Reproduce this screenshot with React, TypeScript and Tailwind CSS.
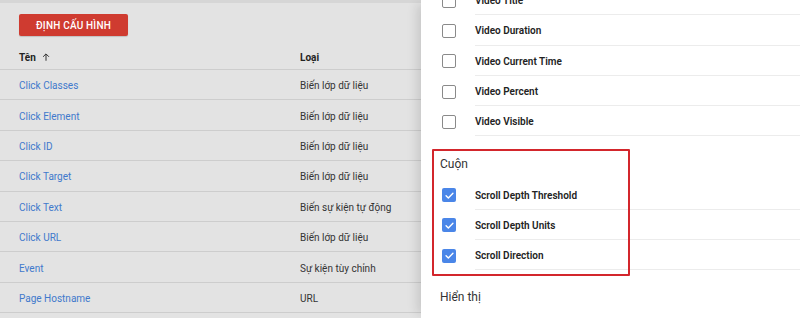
import React from "react";

const leftRows: [string, string][] = [
  ["Click Classes", "Biến lớp dữ liệu"],
  ["Click Element", "Biến lớp dữ liệu"],
  ["Click ID", "Biến lớp dữ liệu"],
  ["Click Target", "Biến lớp dữ liệu"],
  ["Click Text", "Biến sự kiện tự động"],
  ["Click URL", "Biến lớp dữ liệu"],
  ["Event", "Sự kiện tùy chỉnh"],
  ["Page Hostname", "URL"],
];

function Box({ checked }: { checked: boolean }) {
  if (checked) {
    return (
      <div className="w-[14px] h-[14px] rounded-[2px] bg-[#4a86e8] flex items-center justify-center shrink-0">
        <svg width="11" height="11" viewBox="0 0 24 24" fill="none">
          <path d="M4.5 12.5l5 5L19.5 7" stroke="white" strokeWidth="3" strokeLinecap="round" strokeLinejoin="round" />
        </svg>
      </div>
    );
  }
  return <div className="w-[14px] h-[14px] rounded-[2px] border-[1.5px] border-[#8a8a8a] shrink-0" />;
}

function CheckRow({ label, checked }: { label: string; checked: boolean }) {
  return (
    <div className="flex h-[30.3px] items-stretch">
      <div className="w-[54px] pl-[21px] pt-[1px] flex items-center">
        <Box checked={checked} />
      </div>
      <div className="flex-1 flex items-center pt-[2px] border-b border-[#ececec] text-[10px] font-semibold text-[#222]">
        {label}
      </div>
    </div>
  );
}

export default function App() {
  return (
    <div
      className="w-[800px] h-[318px] overflow-hidden flex relative"
      style={{ fontFamily: "Roboto, 'Noto Sans', sans-serif" }}
    >
      <div className="w-[421px] shrink-0 bg-[#e3e3e3] flex flex-col border-t-[3px] border-[#d6d6d6]">
        <div className="pl-[19px] pt-[11px]">
          <div className="w-[109px] h-[22px] bg-[#cf3b30] rounded-[2px] flex items-center justify-center text-white text-[10px] font-medium tracking-[0.2px] shadow-[0_1px_1px_rgba(0,0,0,0.15)]">
            ĐỊNH CẤU HÌNH
          </div>
        </div>
        <div className="flex items-center h-[34px] pt-[9px] border-b border-[#cdcdcd] text-[10px] font-bold text-[#222]">
          <div className="w-[281px] ml-[19px] flex items-center gap-[5px]">
            Tên
            <svg width="10" height="10" viewBox="0 0 24 24" fill="none">
              <path d="M12 21V5M5 11.5l7-7 7 7" stroke="#333" strokeWidth="2.4" />
            </svg>
          </div>
          <div>Loại</div>
        </div>
        {leftRows.map(([n, t]) => (
          <div key={n} className="flex items-center h-[30.4px] pt-[2px] border-b border-[#cdcdcd] text-[10px] shrink-0">
            <div className="w-[281px] ml-[19px] text-[#4179cc]">{n}</div>
            <div className="text-[#333]">{t}</div>
          </div>
        ))}
      </div>
      <div className="flex-1 bg-white relative shadow-[-8px_0_10px_-4px_rgba(0,0,0,0.12)]">
        <div className="-mt-[15px]">
          <CheckRow label="Video Title" checked={false} />
          <CheckRow label="Video Duration" checked={false} />
          <CheckRow label="Video Current Time" checked={false} />
          <CheckRow label="Video Percent" checked={false} />
          <CheckRow label="Video Visible" checked={false} />
          <div className="h-[43px] pl-[19px] flex items-end pb-[6px] text-[12px] text-[#333]">Cuộn</div>
          <CheckRow label="Scroll Depth Threshold" checked />
          <CheckRow label="Scroll Depth Units" checked />
          <CheckRow label="Scroll Direction" checked />
          <div className="h-[54px] pl-[19px] flex items-center text-[12px] text-[#333]">Hiển thị</div>
        </div>
        <div className="absolute left-[11px] top-[149px] w-[198px] h-[127px] border-2 border-[#d3262c] rounded-[1px]" />
      </div>
    </div>
  );
}
